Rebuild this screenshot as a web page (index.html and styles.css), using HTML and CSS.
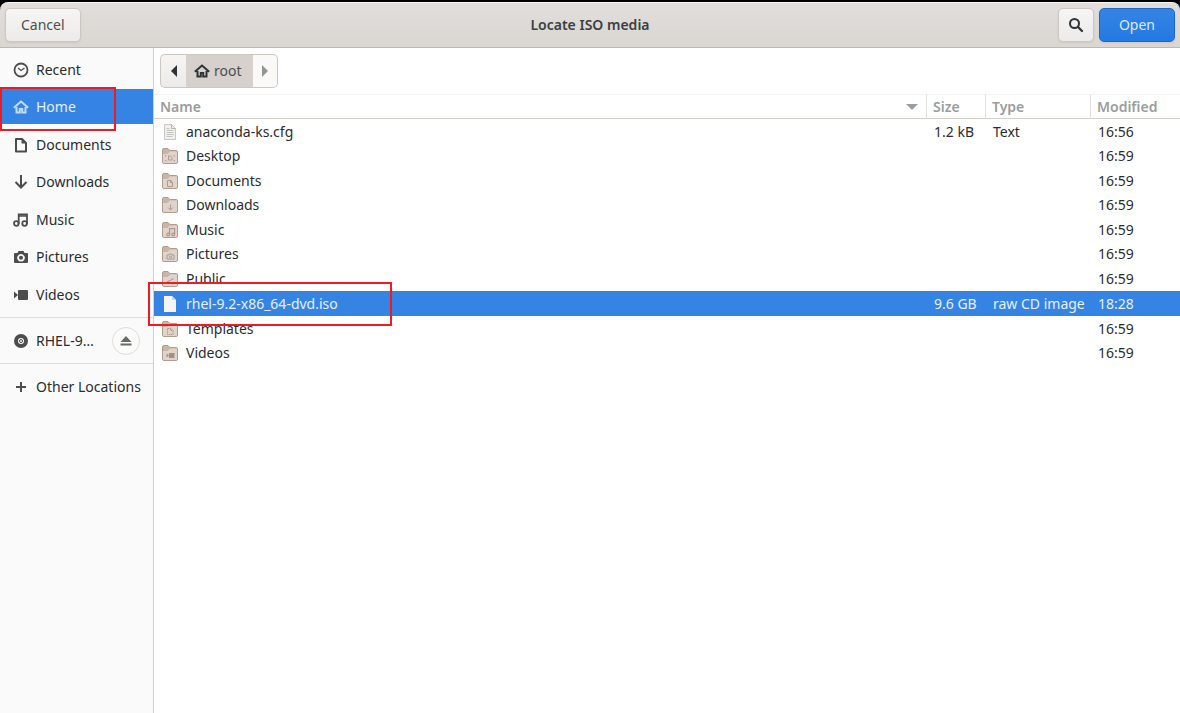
FILE: index.html
```html
<!DOCTYPE html>
<html lang="en">
<head>
<meta charset="utf-8">
<title>Locate ISO media</title>
<link rel="stylesheet" href="styles.css">
</head>
<body>
<svg class="defs" aria-hidden="true">
  <symbol id="i-home" viewBox="0 0 16 16"><path d="M.8 8.800 8 2.600l7.200 6.200M3.500 8v5.600h3.300V10h2.400v3.600h3.300V8" fill="none" stroke="currentColor" stroke-width="2"/></symbol>
  <symbol id="i-folder" viewBox="0 0 16 16"><path d="M.5 2q0-1.500 1.500-1.500h4L8 2.500h6q1.500 0 1.500 1.500v10q0 1.500-1.500 1.500H2Q.5 15.500.5 14z" fill="#c9b5a7" stroke="#b39c8d"/><path d="M1 6h4.500L8 3.500h7V14q0 1-1 1H2q-1 0-1-1z" fill="#dfd4cb"/></symbol>
  <symbol id="i-note" viewBox="0 0 16 16"><circle cx="3.500" cy="12" r="2.200"/><circle cx="11.500" cy="12" r="2.200"/><path d="M5.700 12V2.500h8V12"/></symbol>
</svg>
<main class="dialog">
  <header class="titlebar">
    <button class="btn" type="button">Cancel</button>
    <h1 class="title">Locate ISO media</h1>
    <div class="actions">
      <button class="btn btn-icon" type="button" aria-label="Search"><svg class="icon" viewBox="0 0 16 16"><circle cx="6.500" cy="6.500" r="4.500" fill="none" stroke="currentColor" stroke-width="2"/><path d="m10 10 4 4" stroke="currentColor" stroke-width="2.300" stroke-linecap="round"/></svg></button>
      <button class="btn btn-primary" type="button">Open</button>
    </div>
  </header>
  <div class="content">
    <nav class="sidebar" aria-label="Places">
      <ul class="places">
        <li><a class="place" href="#recent"><svg class="icon" viewBox="0 0 16 16"><circle cx="8" cy="8" r="6.500" fill="none" stroke="currentColor" stroke-width="1.800"/><path d="m5 6 3 2.500L11.500 6" fill="none" stroke="currentColor" stroke-width="1.300"/></svg>Recent</a></li>
        <li><a class="place selected" href="#home" aria-current="page"><svg class="icon"><use href="#i-home"/></svg>Home</a></li>
        <li><a class="place" href="#documents"><svg class="icon" viewBox="0 0 16 16"><path d="M3 2h6l4 4v8.500H3z" fill="none" stroke="currentColor" stroke-width="2" stroke-linejoin="round"/><path d="M8.500 2v4.500H13z" fill="currentColor"/></svg>Documents</a></li>
        <li><a class="place" href="#downloads"><svg class="icon" viewBox="0 0 16 16"><path d="M8 1v12M2.500 8 8 13.500 13.500 8" fill="none" stroke="currentColor" stroke-width="2"/></svg>Downloads</a></li>
        <li><a class="place" href="#music"><svg class="icon" viewBox="0 0 16 16"><g fill="none" stroke="currentColor" stroke-width="1.800"><circle cx="3.300" cy="11.500" r="2.300"/><circle cx="11.600" cy="11.500" r="2.300"/><path d="M5.700 12V2.500H14V12"/></g><path d="M5.700 4h8.300" stroke="currentColor" stroke-width="1.500"/></svg>Music</a></li>
        <li><a class="place" href="#pictures"><svg class="icon" viewBox="0 0 16 16"><path fill-rule="evenodd" fill="currentColor" d="M5.500 2h5l1 2H14q1 0 1 1v8q0 1-1 1H2q-1 0-1-1V5q0-1 1-1h2.500zM8 5a3.800 3.800 0 1 0 .01 0z"/><circle cx="8" cy="8.800" r="2" fill="currentColor"/></svg>Pictures</a></li>
        <li><a class="place" href="#videos"><svg class="icon" viewBox="0 0 16 16"><path d="M1 4.500 5 8l-4 3.500zM5 4q0-1 1-1h8q1 0 1 1v8q0 1-1 1H6q-1 0-1-1z" fill="currentColor"/></svg>Videos</a></li>
      </ul>
      <div class="group volume">
        <a class="place" href="#volume"><svg class="icon" viewBox="0 0 16 16"><circle cx="8" cy="8" r="5" fill="none" stroke="currentColor" stroke-width="4"/><circle cx="8" cy="8" r="1.500" fill="none" stroke="currentColor"/></svg>RHEL-9…</a>
        <button class="eject" type="button" aria-label="Eject"><svg class="icon" viewBox="0 0 16 16"><path d="m8 3 5.500 6h-11zM2.500 10.500h11v2h-11z" fill="currentColor"/></svg></button>
      </div>
      <div class="group">
        <a class="place" href="#other"><svg class="icon" viewBox="0 0 16 16"><path d="M8 3v10M3 8h10" stroke="currentColor" stroke-width="2"/></svg>Other Locations</a>
      </div>
    </nav>
    <section class="browser">
      <div class="pathbar">
        <button class="crumb" type="button" aria-label="Back"><svg class="arrow" viewBox="0 0 8 12"><path d="M7 0v12L1 6z" fill="currentColor"/></svg></button>
        <button class="crumb current" type="button"><svg class="icon"><use href="#i-home"/></svg>root</button>
        <button class="crumb disabled" type="button" aria-label="Forward" disabled><svg class="arrow" viewBox="0 0 8 12"><path d="M1 0v12l6-6z" fill="currentColor"/></svg></button>
      </div>
      <table class="files">
        <colgroup><col><col class="c-size"><col class="c-type"><col class="c-mod"></colgroup>
        <thead>
          <tr><th scope="col"><span class="sort">Name<svg class="caret" viewBox="0 0 12 6"><path d="M0 0h12L6 6z" fill="currentColor"/></svg></span></th><th scope="col">Size</th><th scope="col">Type</th><th scope="col">Modified</th></tr>
        </thead>
        <tbody>
          <tr><td><span class="file"><svg class="icon" viewBox="0 0 16 16"><path d="M2.500.5h7l4 4v11h-11z" fill="#f0f0ee" stroke="#c6c6c2"/><path d="M9.500.5v4h4" fill="none" stroke="#b5b5b0"/><path d="M4.500 4.500h3M4.500 6.500h7M4.500 8.500h7M4.500 10.500h7M4.500 12.500h6" stroke="#c4c4c0"/></svg>anaconda-ks.cfg</span></td><td>1.2 kB</td><td>Text</td><td>16:56</td></tr>
          <tr><td><span class="file"><svg class="icon" viewBox="0 0 16 16"><use href="#i-folder"/><path class="emblem" d="M3.500 8.500v-1h1M11.500 7.500h1v1M3.500 12v1h1M11.500 13h1v-1M6.500 8h2l1.500 1.500V12H6.500z"/></svg>Desktop</span></td><td></td><td></td><td>16:59</td></tr>
          <tr><td><span class="file"><svg class="icon" viewBox="0 0 16 16"><use href="#i-folder"/><path class="emblem" d="M5.500 7.500H9l1.500 2v4h-5zM8.500 7.500v2h2"/></svg>Documents</span></td><td></td><td></td><td>16:59</td></tr>
          <tr><td><span class="file"><svg class="icon" viewBox="0 0 16 16"><use href="#i-folder"/><path class="emblem" d="M8.500 7.500V13M6 10.500 8.500 13l2.500-2.500"/></svg>Downloads</span></td><td></td><td></td><td>16:59</td></tr>
          <tr><td><span class="file"><svg class="icon" viewBox="0 0 16 16"><use href="#i-folder"/><use class="emblem" href="#i-note" x="4" y="5" width="10" height="10"/></svg>Music</span></td><td></td><td></td><td>16:59</td></tr>
          <tr><td><span class="file"><svg class="icon" viewBox="0 0 16 16"><use href="#i-folder"/><path class="emblem" d="M5 9h2l.5-1h2l.5 1h2v4H5zM8.500 10a1 1 0 1 0 .01 0z"/></svg>Pictures</span></td><td></td><td></td><td>16:59</td></tr>
          <tr><td><span class="file"><svg class="icon" viewBox="0 0 16 16"><use href="#i-folder"/><path class="emblem" d="m11 8-5 2.500 5 2.500M5.500 10v1M11 7.500v1M11 12.500v1"/></svg>Public</span></td><td></td><td></td><td>16:59</td></tr>
          <tr class="selected" aria-selected="true"><td><span class="file"><svg class="icon" viewBox="0 0 16 16"><path d="M2 0h8l4 4v12H2z" fill="#f6f5f4"/><path d="M10 0v4h4z" fill="#c9d5e2"/></svg>rhel-9.2-x86_64-dvd.iso</span></td><td>9.6 GB</td><td>raw CD image</td><td>18:28</td></tr>
          <tr><td><span class="file"><svg class="icon" viewBox="0 0 16 16"><use href="#i-folder"/><path class="emblem" stroke-dasharray="1.500 .7" d="M5.500 7.500H9l2 2v4H5.500zM8.500 7.500v2h2"/></svg>Templates</span></td><td></td><td></td><td>16:59</td></tr>
          <tr><td><span class="file"><svg class="icon" viewBox="0 0 16 16"><use href="#i-folder"/><path d="M4.500 8.500 7 10.500l-2.500 2zM7 8h5.500v5H7z" fill="#a68e80"/></svg>Videos</span></td><td></td><td></td><td>16:59</td></tr>
        </tbody>
      </table>
    </section>
  </div>
  <div class="mark mark-home"></div>
  <div class="mark mark-iso"></div>
</main>
</body>
</html>
```
FILE: styles.css
```css
* { box-sizing: border-box; }
body {
  margin: 0;
  background: #000;
  color: #2a2d2e;
  font: 14px/20px "Noto Sans", "Open Sans", sans-serif;
}
button { font: inherit; color: inherit; margin: 0; padding: 0; }
a { color: inherit; text-decoration: none; }
.defs { position: absolute; width: 0; height: 0; }
.icon { width: 16px; height: 16px; flex: none; }
.dialog {
  position: relative;
  display: flex;
  flex-direction: column;
  min-height: 100vh;
  padding-top: 2px;
}
.titlebar {
  display: grid;
  grid-template-columns: 1fr auto 1fr;
  align-items: center;
  height: 46px;
  padding: 0 5px;
  border-top: 1px solid #f8f7f6;
  border-bottom: 1px solid #bfb8b1;
  border-radius: 8px 8px 0 0;
  background: linear-gradient(#e1dedb, #dad6d2);
}
.title { margin: 0; font-size: 14px; font-weight: 600; color: #3a4043; }
.actions { display: flex; gap: 5px; justify-self: end; }
.btn {
  justify-self: start;
  height: 34px;
  padding: 0 15px;
  border: 1px solid #cdc7c2;
  border-radius: 5px;
  background: linear-gradient(#f6f5f4, #edebe9);
  box-shadow: 0 1px 2px rgba(0, 0, 0, .08);
  color: #4b4f50;
}
.btn-icon { display: grid; place-items: center; width: 36px; padding: 0; color: #2e3436; }
.btn-primary {
  padding: 0 19px;
  border-color: #1b6acb;
  background: linear-gradient(#3584e4, #2379e2);
  color: #dce9fa;
}
.content { flex: 1; display: grid; grid-template-columns: 154px 1fr; }
.sidebar { border-right: 1px solid #d5d0cc; background: #fafafa; }
.places { display: flex; flex-direction: column; margin: 0; padding: 4px 0 3px; list-style: none; }
.places li { padding-bottom: 2px; }
.places li:nth-child(even) { padding-bottom: 3px; }
.place { display: flex; align-items: center; gap: 7px; height: 35px; padding-left: 13px; }
.place .icon { color: #4d4d4d; }
.place.selected { background: #3584e4; color: #e6effb; }
.place.selected .icon { color: #c4dbf7; }
.group { padding: 5px 0; border-top: 1px solid #dedcda; }
.volume { display: flex; justify-content: space-between; align-items: center; padding-right: 13px; }
.eject {
  display: grid;
  place-items: center;
  width: 28px;
  height: 28px;
  border: 1px solid #e0dddb;
  border-radius: 50%;
  background: #fbfbfa;
  color: #656b6b;
}
.browser { min-width: 0; background: #fff; }
.pathbar { display: flex; padding: 6px; }
.crumb {
  display: flex;
  align-items: center;
  justify-content: center;
  gap: 4px;
  width: 26px;
  height: 34px;
  border: 1px solid #cdc7c2;
  border-right: 0;
  border-radius: 5px 0 0 5px;
  background: linear-gradient(#f6f5f4, #edebe9);
  color: #2e3436;
}
.crumb.current { width: auto; padding: 0 11px 0 8px; border-left: 0; border-radius: 0; background: #d6d1cd; color: #4b4f50; }
.crumb.current .icon { color: #2e3436; }
.crumb.disabled { width: 25px; border-right: 1px solid #cdc7c2; border-left: 0; border-radius: 0 5px 5px 0; background: #faf9f8; color: #929595; }
.arrow { width: 8px; height: 12px; }
.files { width: 100%; border-collapse: separate; border-spacing: 0; table-layout: fixed; }
.c-size { width: 59px; }
.c-type { width: 105px; }
.c-mod { width: 90px; }
.files th {
  height: 25px;
  padding: 0 6px;
  border-top: 1px solid #f6f5f4;
  border-bottom: 1px solid #d5d0cc;
  border-left: 1px solid #e2dfdc;
  text-align: left;
  font-weight: 600;
  color: #9a9d9d;
}
.files th:first-child { border-left: 0; }
.sort { display: flex; justify-content: space-between; align-items: center; padding-right: 2px; }
.caret { width: 12px; height: 6px; }
.files td { height: 25px; padding: 0 8px; white-space: nowrap; }
.files tr:nth-child(even) td { height: 24px; }
.files tr.selected td { height: 25px; }
.file { display: flex; align-items: center; gap: 8px; }
.emblem { fill: none; stroke: #b09a8c; stroke-width: 1; }
use.emblem { stroke-width: 2; }
.files .selected td { background: #3584e4; color: #e6effb; }
.mark { position: absolute; border: 2px solid #ed1c24; pointer-events: none; }
.mark-home { left: 0; top: 87px; width: 116px; height: 44px; }
.mark-iso { left: 148px; top: 282px; width: 244px; height: 44px; }
```
